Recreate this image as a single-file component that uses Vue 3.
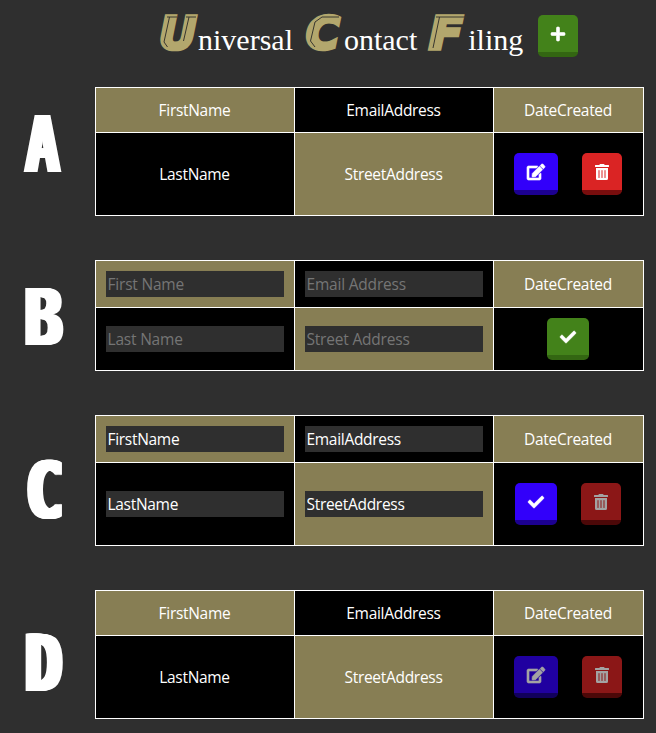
<script setup>
const icons = {
  plus: { w: 448, d: 'M416 208H272V64c0-17.67-14.33-32-32-32h-32c-17.67 0-32 14.33-32 32v144H32c-17.67 0-32 14.33-32 32v32c0 17.67 14.33 32 32 32h144v144c0 17.67 14.33 32 32 32h32c17.67 0 32-14.33 32-32V304h144c17.67 0 32-14.33 32-32v-32c0-17.67-14.33-32-32-32z' },
  check: { w: 512, d: 'M173.898 439.404l-166.4-166.4c-9.997-9.997-9.997-26.206 0-36.204l36.203-36.204c9.997-9.998 26.207-9.998 36.204 0L192 312.69 432.095 72.596c9.997-9.997 26.207-9.997 36.204 0l36.203 36.204c9.997 9.997 9.997 26.206 0 36.204l-294.4 294.401c-9.998 9.997-26.207 9.997-36.204-.001z' },
  edit: { w: 576, d: 'M402.6 83.2l90.2 90.2c3.8 3.8 3.8 10 0 13.8L274.4 405.6l-92.8 10.3c-12.4 1.4-22.9-9.1-21.5-21.5l10.3-92.8L388.8 83.2c3.8-3.8 10-3.8 13.8 0zm162-22.9l-48.8-48.8c-15.2-15.2-39.9-15.2-55.2 0l-35.4 35.4c-3.8 3.8-3.8 10 0 13.8l90.2 90.2c3.8 3.8 10 3.8 13.8 0l35.4-35.4c15.2-15.3 15.2-40 0-55.2zM384 346.2V448H64V128h229.8c3.2 0 6.2-1.3 8.5-3.5l40-40c7.6-7.6 2.2-20.5-8.5-20.5H48C21.5 64 0 85.5 0 112v352c0 26.5 21.5 48 48 48h352c26.5 0 48-21.5 48-48V306.2c0-10.7-12.9-16-20.5-8.5l-40 40c-2.2 2.3-3.5 5.3-3.5 8.500z' },
  trash: { w: 448, d: 'M32 464a48 48 0 0 0 48 48h288a48 48 0 0 0 48-48V128H32zm272-256a16 16 0 0 1 32 0v224a16 16 0 0 1-32 0zm-96 0a16 16 0 0 1 32 0v224a16 16 0 0 1-32 0zm-96 0a16 16 0 0 1 32 0v224a16 16 0 0 1-32 0zM432 32H312l-9.400-18.700A24 24 0 0 0 281.100 0H166.800a23.700 23.700 0 0 0-21.400 13.300L136 32H16A16 16 0 0 0 0 48v32a16 16 0 0 0 16 16h416a16 16 0 0 0 16-16V48a16 16 0 0 0-16-16z' },
}

const words = [
  { cap: 'U', rest: 'niversal', x: -1, k: 1.03, lines: 'M7 4H17M9.500 4L4 29L7.500 34M26 4H36M29 4L23.500 28' },
  { cap: 'C', rest: 'ontact', x: 0, k: 1.02, lines: 'M33 4H16L9 9L4.500 28L9 34' },
  { cap: 'F', rest: 'iling', x: -1, k: 1.1, lines: 'M6 4H37M9.500 4L3 35' },
]

const edit = { icon: 'edit', tone: 'blue' }
const trash = { icon: 'trash', tone: 'red' }
const cards = [
  { id: 'a', form: false, actions: [edit, trash] },
  { id: 'b', form: true, empty: true, actions: [{ icon: 'check', tone: 'green' }] },
  { id: 'c', form: true, actions: [{ icon: 'check', tone: 'blue' }, { ...trash, off: true }] },
  { id: 'd', form: false, actions: [{ ...edit, off: true }, { ...trash, off: true }] },
]
const fields = [
  { name: 'FirstName', hint: 'First Name', gold: true },
  { name: 'EmailAddress', hint: 'Email Address' },
  { name: 'DateCreated', gold: true, fixed: true },
  { name: 'LastName', hint: 'Last Name' },
  { name: 'StreetAddress', hint: 'Street Address', gold: true },
]
</script>

<template>
  <div class="page">
    <header>
      <h1>
        <span v-for="w in words" :key="w.cap" class="word">
          <svg class="cap" width="39" height="38" viewBox="0 0 39 38">
            <text :transform="`translate(${w.x} 35.500) scale(${w.k} 1)`">{{ w.cap }}</text>
            <path :d="w.lines" />
          </svg><span>{{ w.rest }}</span>
        </span>
      </h1>
      <button class="btn green plus">
        <svg :viewBox="`0 0 ${icons.plus.w} 512`" width="14" height="16"><path :d="icons.plus.d" /></svg>
      </button>
    </header>
    <main>
      <div class="labels">
        <div v-for="l in ['A', 'B', 'C', 'D']" :key="l" class="label"><span :class="'l' + l">{{ l }}</span></div>
      </div>
      <div class="cards">
        <section v-for="c in cards" :key="c.id" class="card" :class="c.id">
          <div v-for="f in fields" :key="f.name" class="cell" :class="{ gold: f.gold }">
            <input v-if="c.form && !f.fixed" :placeholder="f.hint" :value="c.empty ? '' : f.name" />
            <span v-else>{{ f.name }}</span>
          </div>
          <div class="cell actions">
            <button v-for="b in c.actions" :key="b.icon" class="btn" :class="[b.tone, { off: b.off }]">
              <svg :class="b.icon" :viewBox="`0 0 ${icons[b.icon].w} 512`" :width="icons[b.icon].w / 32" height="16"><path :d="icons[b.icon].d" /></svg>
            </button>
          </div>
        </section>
      </div>
    </main>
  </div>
</template>

<style>
body { background: #2f2f2f; }
</style>

<style scoped>
* { box-sizing: border-box; }
.page {
  height: 733px;
  overflow: hidden;
  color: #fff;
  background: #2f2f2f;
  font: 15.5px/22px "Open Sans", "Noto Sans", sans-serif;
  letter-spacing: -0.3px;
}
header { display: flex; height: 58px; padding: 13px 0 0 160px; }
h1 {
  display: flex;
  gap: 13px;
  width: 378px;
  margin: 0;
  font: 30px/38px "Liberation Serif", serif;
  letter-spacing: 0;
}
.word { display: flex; height: 38px; }
.word span { padding-top: 8px; }
.cap { flex: none; margin-right: -1px; overflow: visible; }
.cap text { font: italic bold 45px "DejaVu Sans", sans-serif; fill: #b3a76d; stroke: #b3a76d; stroke-width: 3.6px; }
.cap path { fill: none; stroke: #37362f; stroke-width: 1px; }
.plus { margin-top: 2px; }
main { display: flex; }
.labels { width: 95px; }
.label {
  display: flex;
  justify-content: center;
  align-items: center;
  width: 88px;
  height: 173px;
  padding-top: 1px;
  font: bold 78px/78px "DejaVu Sans Mono", monospace;
  letter-spacing: 0;
}
.label span {
  transform: scaleX(0.8);
  text-shadow: -1px 0, -2px 0, -3px 0, -4px 0, 1px 0, 2px 0, 3px 0, 4px 0;
}
.label .lA { transform: scaleX(0.72); margin-left: -4px; }
.label .lB, .label .lD { margin-left: -2px; }
.cards { display: flex; flex-direction: column; gap: 44px; padding-top: 29px; }
.card {
  display: grid;
  grid-template-columns: 198px 198px 149px;
  grid-template-rows: 44px 82px;
  gap: 1px;
  padding: 1px;
  width: 549px;
  background: #fff;
}
.card.b { grid-template-rows: 46px 62px; }
.card.c { grid-template-rows: 46px 82px; }
.cell { display: flex; justify-content: center; align-items: center; padding: 0 11px 0 10px; background: #000; }
.cell.gold { background: #877e54; }
.cell.actions { gap: 24px; padding-right: 11px; padding-left: 9px; }
input {
  flex: none;
  width: 178px;
  margin-right: -1px;
  height: 26px;
  padding: 1px 1.5px;
  border: 0;
  border-radius: 0;
  color: #fff;
  background: #2f2f2f;
  font: inherit;
  letter-spacing: inherit;
}
input::placeholder { color: #757575; opacity: 1; letter-spacing: -0.2px; }
.btn {
  display: flex;
  flex: none;
  justify-content: center;
  align-items: center;
  height: 42px;
  padding: 0 13px;
  border: 0;
  border-bottom: 5px solid;
  border-radius: 5px;
}
.btn svg { display: block; fill: #fff; stroke: #fff; stroke-width: 20px; overflow: visible; }
.btn .trash { stroke-width: 0; }
.green { background: #43821a; border-color: #336612; }
.blue { background: #3200fa; border-color: #1c0090; }
.red { background: #da2424; border-color: #780d0d; }
.off { opacity: 0.64; }
</style>
